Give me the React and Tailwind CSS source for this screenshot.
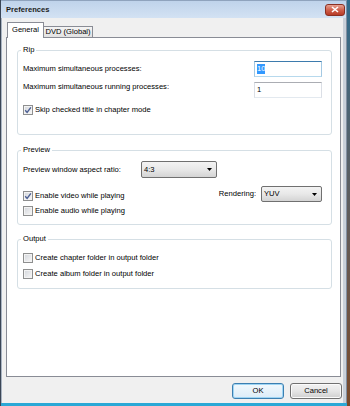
import React from "react";

function Check({ checked, label, className = "" }) {
  return (
    <div className={`flex items-center gap-[2px] ${className}`}>
      <span className="w-[10px] h-[10px] shrink-0 border border-[#8e8f8f] bg-linear-to-br from-[#d2d5da] to-[#f8f8f8] shadow-[inset_0_0_0_1px_#f3f3f3] flex items-center justify-center">
        {checked && (
          <svg width="8" height="8" viewBox="0 0 8 8">
            <path d="M1.2 4.3 L3.1 6.4 L6.9 1.3" stroke="#4c5f94" strokeWidth="1.4" fill="none" />
          </svg>
        )}
      </span>
      <span className="leading-[10px]">{label}</span>
    </div>
  );
}

function TextBox({ value, focused }) {
  return (
    <div
      className={`w-[68px] h-[16px] border bg-white flex items-center pl-[2px] ${
        focused
          ? "border-[#a4c9e3] border-t-[#3d7bad] border-b-[#b7d9ed]"
          : "border-[#dbdfe6] border-t-[#abadb3] border-b-[#e3e9ef]"
      }`}
    >
      {focused ? <span className="bg-[#3399ff] text-white leading-[10px]">{value}</span> : <span className="leading-[10px]">{value}</span>}
    </div>
  );
}

function Combo({ value, className }) {
  return (
    <div className={`border border-[#707070] rounded-[2px] bg-linear-to-b from-[#f3f3f3] via-[#e8e8e8] to-[#d4d4d4] flex items-center justify-between pl-[2px] pr-[4px] ${className}`}>
      <span className="leading-[10px]">{value}</span>
      <svg width="5" height="3" viewBox="0 0 5 3">
        <path d="M0 0H5L2.5 3Z" fill="#000" />
      </svg>
    </div>
  );
}

function Group({ title, children, className = "" }) {
  return (
    <fieldset className={`border border-[#d5dfe5] rounded-[3px] ${className}`}>
      <legend className="ml-[3px] px-[2px] leading-[10px]">{title}</legend>
      {children}
    </fieldset>
  );
}

function Button({ label, primary }) {
  return (
    <div
      className={`w-[52px] h-[16px] rounded-[3px] border flex items-center justify-center leading-[10px] ${
        primary
          ? "border-[#3c7fb1] bg-linear-to-b from-[#f2f9fd] to-[#dcecf8] shadow-[inset_0_0_0_1px_#9fd5f4]"
          : "border-[#707070] bg-linear-to-b from-[#f2f2f2] via-[#e6e6e6] to-[#cfcfcf] shadow-[inset_0_0_0_1px_#fbfbfb]"
      }`}
    >
      {label}
    </div>
  );
}

export default function App() {
  return (
    <div className="w-[350px] h-[406px] flex flex-col bg-linear-to-b from-[#2f6b8c] to-[#7a4a2a] font-['Liberation_Sans',Arial,sans-serif] text-[7.6px] text-black overflow-hidden">
      <div className="flex-1 flex w-[347px] flex-col border-l border-[#3b4656]">
        {/* title bar */}
        <div className="h-[18px] shrink-0 flex items-center justify-between pl-[5px] pr-[1px] bg-linear-to-b from-[#bfd3eb] to-[#d3e2f3] border-t border-[#8fa3bd] border-r border-r-[#7d8ea6]">
          <span className="font-bold text-[7.6px] text-[#1b1b1b]">Preferences</span>
          <div className="w-[20px] h-[12px] rounded-[3px] border border-[#8a3023] bg-linear-to-b from-[#e6a192] via-[#d0604c] to-[#b63a26] flex items-center justify-center">
            <svg width="8" height="7" viewBox="0 0 8 7">
              <path d="M1 1 L7 6 M7 1 L1 6" stroke="#fff" strokeWidth="1.6" />
            </svg>
          </div>
        </div>

        <div className="flex-1 flex">
          <div className="w-px bg-[#a9b4c2]" />
          {/* client area */}
          <div className="flex-1 flex flex-col bg-[#f0f0f0] pl-[4px] pr-[2px] pt-[4px] pb-[4px]">
            <div className="relative z-10 -mb-px flex items-end h-[16px] pl-px">
              <div className="w-[37px] h-[16px] bg-white border border-b-0 border-[#898c95] flex items-center justify-center pb-px">
                General
              </div>
              <div className="w-[49px] h-[12px] bg-linear-to-b from-[#f4f4f4] to-[#e2e2e2] border border-l-0 border-[#898c95] flex items-center justify-center">
                DVD (Global)
              </div>
            </div>

            <div className="flex-1 border border-[#898c95] bg-white pt-[7px] pl-[10px] pr-[8px]">
              <Group title="Rip">
                <div className="pt-[6px] pb-[19px] pl-[5px] pr-[9px]">
                  <div className="flex items-center justify-between h-[16px]">
                    <span>Maximum simultaneous processes:</span>
                    <TextBox value="10" focused />
                  </div>
                  <div className="flex items-start justify-between h-[16px] mt-[5px]">
                    <span className="leading-[10px]">Maximum simultaneous running processes:</span>
                    <TextBox value="1" />
                  </div>
                  <Check checked label="Skip checked title in chapter mode" className="mt-[7px]" />
                </div>
              </Group>

              <Group title="Preview" className="mt-[10px]">
                <div className="pt-[6px] pb-[8px] pl-[5px] pr-[9px]">
                  <div className="flex items-center h-[17px]">
                    <span className="w-[118px]">Preview window aspect ratio:</span>
                    <Combo value="4:3" className="w-[76px] h-[17px]" />
                  </div>
                  <div className="flex items-center justify-between h-[16px] mt-[8px]">
                    <Check checked label="Enable video while playing" className="mt-[3px]" />
                    <div className="flex items-center gap-[5px]">
                      <span>Rendering:</span>
                      <Combo value="YUV" className="w-[61px] h-[16px]" />
                    </div>
                  </div>
                  <Check label="Enable audio while playing" className="mt-[4px]" />
                </div>
              </Group>

              <Group title="Output" className="mt-[9px]">
                <div className="pt-[9px] pb-[9px] pl-[5px] pr-[9px]">
                  <Check label="Create chapter folder in output folder" />
                  <Check label="Create album folder in output folder" className="mt-[6px]" />
                </div>
              </Group>
            </div>

            <div className="flex justify-end gap-[6px] mt-[6px] -mr-px">
              <Button label="OK" primary />
              <Button label="Cancel" />
            </div>
          </div>
          {/* right frame */}
          <div className="w-[4px] bg-[#c9d0d9] border-r border-[#8390a2]" />
        </div>
        <div className="h-[3px] shrink-0 bg-[#2aa8d6]" />
      </div>
    </div>
  );
}
